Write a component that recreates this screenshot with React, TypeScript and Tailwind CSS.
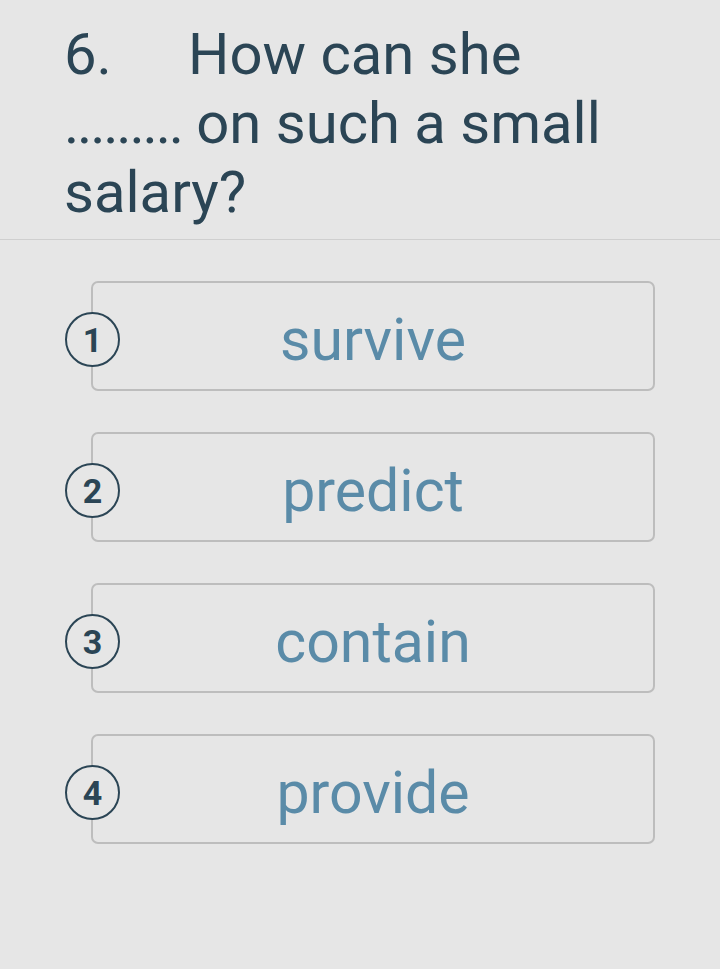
const options = ["survive", "predict", "contain", "provide"];

export default function App() {
  return (
    <div
      className="min-h-[969px] w-[720px] bg-[#e6e6e6]"
      style={{ fontFamily: "Roboto, 'Noto Sans', sans-serif" }}
    >
      <div className="px-[64px] pt-[20px] pb-[12px] border-b border-[#cfcfcf]">
        <p className="text-[58px] leading-[69px] text-[#2b4555]">
          <span className="inline-block w-[124px]">6.</span>How can she
          <br />
          <span className="tracking-[-2.2px]">.........</span> on such a small
          <br />
          salary?
        </p>
      </div>

      <div className="flex flex-col gap-[41px] pt-[41px] pl-[91px] pr-[65px]">
        {options.map((opt, i) => (
          <div
            key={opt}
            className="relative h-[110px] rounded-[7px] border-2 border-[#bdbdbd] flex items-center justify-center"
          >
            <div className="absolute left-[-28px] top-[29px] w-[55px] h-[55px] rounded-full border-2 border-[#2b4555] bg-[#e6e6e6] flex items-center justify-center">
              <span className="text-[34px] font-bold text-[#2b4555] leading-none">
                {i + 1}
              </span>
            </div>
            <span className="text-[59px] leading-none text-[#5a8ba8] pt-[6px]">
              {opt}
            </span>
          </div>
        ))}
      </div>
    </div>
  );
}
